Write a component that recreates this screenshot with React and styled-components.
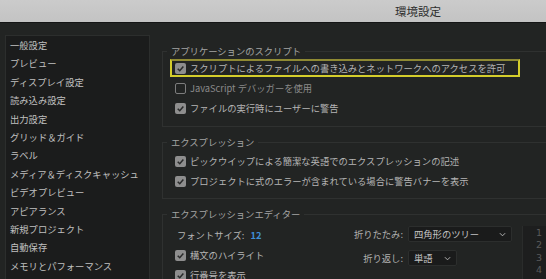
import React from "react";
import styled, { createGlobalStyle } from "styled-components";

const GlobalStyle = createGlobalStyle`
  html, body {
    margin: 0;
    padding: 0;
    width: 546px;
    height: 279px;
    overflow: hidden;
    background: #222423;
    font-family: "Noto Sans CJK JP", "Noto Sans", sans-serif;
  }
`;

const Page = styled.div`
  width: 546px;
  height: 279px;
  overflow: hidden;
  background: #222423;
`;

const TitleBar = styled.div`
  width: 836px;
  height: 22px;
  background: linear-gradient(#cbcbcb, #c3c3c3);
  border-bottom: 1px solid #141515;
  display: flex;
  align-items: center;
  justify-content: center;
`;

const Title = styled.span`
  font-size: 11.5px;
  color: #2e2e2e;
`;

const Body = styled.div`
  display: flex;
  padding-top: 12px;
`;

const Sidebar = styled.div`
  margin-left: 5px;
  width: 143px;
  height: 260px;
  flex-shrink: 0;
  background: #1b1c1c;
  border: 1px solid #2c2e2d;
`;

const NavItem = styled.div`
  height: 18.4px;
  line-height: 18.4px;
  padding-left: 4px;
  font-size: 9.3px;
  color: #c0c0c0;
  white-space: nowrap;
`;

const Main = styled.div`
  padding: 10px 0 0 12px;
  width: 560px;
  flex-shrink: 0;
`;

const Section = styled.fieldset`
  margin: ${(p) => (p.first ? "0" : "9px")} 0 0 0;
  padding: ${(p) => p.pt}px 0 ${(p) => p.pb}px 0;
  border: 1px solid #2f3130;
  min-width: 0;
`;

const Legend = styled.legend`
  margin-left: 4px;
  padding: 0 4px;
  font-size: 9.3px;
  line-height: 13px;
  color: #a4a4a4;
`;

const Row = styled.div`
  box-sizing: border-box;
  display: flex;
  align-items: center;
  height: ${(p) => (p.highlight ? "18px" : "20px")};
  margin: ${(p) => (p.highlight ? "1px 0 1px 7px" : "0")};
  padding-left: ${(p) => (p.highlight ? "3px" : "12px")};
  width: ${(p) => (p.highlight ? "350px" : "auto")};
  border: ${(p) => (p.highlight ? "2px solid #d4cd2b" : "none")};
  border-top-color: ${(p) => (p.highlight ? "#8f8a33" : "transparent")};
`;

const Box = styled.span`
  box-sizing: border-box;
  width: 11px;
  height: 11px;
  border-radius: 2px;
  flex-shrink: 0;
  background: ${(p) => (p.checked ? "#8e8e8e" : "transparent")};
  border: ${(p) => (p.checked ? "none" : "1.5px solid #7d7d7d")};
  display: flex;
  align-items: center;
  justify-content: center;
`;

const Label = styled.span`
  margin-left: 4px;
  font-size: 9.3px;
  color: ${(p) => (p.dim ? "#8a8a8a" : "#b5b5b5")};
  white-space: nowrap;
`;

const EditorBody = styled.div`
  display: flex;
`;

const LeftCol = styled.div`
  width: 177px;
  flex-shrink: 0;
`;

const FontRow = styled.div`
  height: 20px;
  display: flex;
  align-items: center;
  padding-left: 14px;
  font-size: 9.3px;
  color: #b5b5b5;
`;

const SizeValue = styled.span`
  margin-left: 6px;
  color: #3f8fd6;
  font-weight: 600;
`;

const MidCol = styled.div`
  display: flex;
  flex-direction: column;
  gap: 8px;
  padding-top: 1px;
  flex-shrink: 0;
`;

const SelectRow = styled.div`
  display: flex;
  align-items: center;
  height: 16px;
`;

const SelectLabel = styled.span`
  width: 63px;
  text-align: right;
  font-size: 9.3px;
  color: #b0b0b0;
  white-space: nowrap;
`;

const Select = styled.div`
  box-sizing: border-box;
  margin-left: 5px;
  width: ${(p) => p.w}px;
  height: 16px;
  background: #1a1b1b;
  border: 1px solid #2c2e2d;
  border-radius: 2px;
  display: flex;
  align-items: center;
  justify-content: space-between;
  padding: 0 5px;
  font-size: 9.3px;
  color: #c2c2c2;
`;

const Editor = styled.div`
  margin: 1px 0 0 10px;
  width: 120px;
  height: 60px;
  background: #1d1e1e;
  border-left: 1px solid #2a2c2b;
  flex-shrink: 0;
`;

const Gutter = styled.div`
  width: 19px;
  padding-top: 1px;
  text-align: right;
  font-size: 9.5px;
  line-height: 12.3px;
  color: #5a5a5a;
  font-family: "DejaVu Sans", sans-serif;
`;

const Check = () => (
  <svg width="9" height="9" viewBox="0 0 12 12">
    <path d="M2.3 6.3 L5 9 L9.8 3.2" fill="none" stroke="#2a2b2b" strokeWidth="2" />
  </svg>
);

const Chevron = () => (
  <svg width="7" height="5" viewBox="0 0 8 5">
    <path d="M1 1 L4 4 L7 1" fill="none" stroke="#b5b5b5" strokeWidth="1.1" />
  </svg>
);

const CheckItem = ({ checked, highlight, dim, children }) => (
  <Row highlight={highlight}>
    <Box checked={checked}>{checked && <Check />}</Box>
    <Label dim={dim}>{children}</Label>
  </Row>
);

const navItems = [
  "一般設定",
  "プレビュー",
  "ディスプレイ設定",
  "読み込み設定",
  "出力設定",
  "グリッド＆ガイド",
  "ラベル",
  "メディア＆ディスクキャッシュ",
  "ビデオプレビュー",
  "アピアランス",
  "新規プロジェクト",
  "自動保存",
  "メモリとパフォーマンス",
  "",
];

export default function App() {
  return (
    <Page>
      <GlobalStyle />
      <TitleBar>
        <Title>環境設定</Title>
      </TitleBar>
      <Body>
        <Sidebar>
          {navItems.map((n, i) => (
            <NavItem key={i}>{n}</NavItem>
          ))}
        </Sidebar>
        <Main>
          <Section first pt={0} pb={8}>
            <Legend>アプリケーションのスクリプト</Legend>
            <CheckItem checked highlight>
              スクリプトによるファイルへの書き込みとネットワークへのアクセスを許可
            </CheckItem>
            <CheckItem dim>JavaScript デバッガーを使用</CheckItem>
            <CheckItem checked>ファイルの実行時にユーザーに警告</CheckItem>
          </Section>
          <Section pt={2} pb={7}>
            <Legend>エクスプレッション</Legend>
            <CheckItem checked>ピックウイップによる簡潔な英語でのエクスプレッションの記述</CheckItem>
            <CheckItem checked>プロジェクトに式のエラーが含まれている場合に警告バナーを表示</CheckItem>
          </Section>
          <Section pt={4} pb={10}>
            <Legend>エクスプレッションエディター</Legend>
            <EditorBody>
              <LeftCol>
                <FontRow>
                  フォントサイズ:<SizeValue>12</SizeValue>
                </FontRow>
                <CheckItem checked>構文のハイライト</CheckItem>
                <CheckItem checked>行番号を表示</CheckItem>
              </LeftCol>
              <MidCol>
                <SelectRow>
                  <SelectLabel>折りたたみ:</SelectLabel>
                  <Select w={104}>
                    四角形のツリー
                    <Chevron />
                  </Select>
                </SelectRow>
                <SelectRow>
                  <SelectLabel>折り返し:</SelectLabel>
                  <Select w={49}>
                    単語
                    <Chevron />
                  </Select>
                </SelectRow>
              </MidCol>
              <Editor>
                <Gutter>
                  <div>1</div>
                  <div>2</div>
                  <div>3</div>
                  <div>4</div>
                </Gutter>
              </Editor>
            </EditorBody>
          </Section>
        </Main>
      </Body>
    </Page>
  );
}
